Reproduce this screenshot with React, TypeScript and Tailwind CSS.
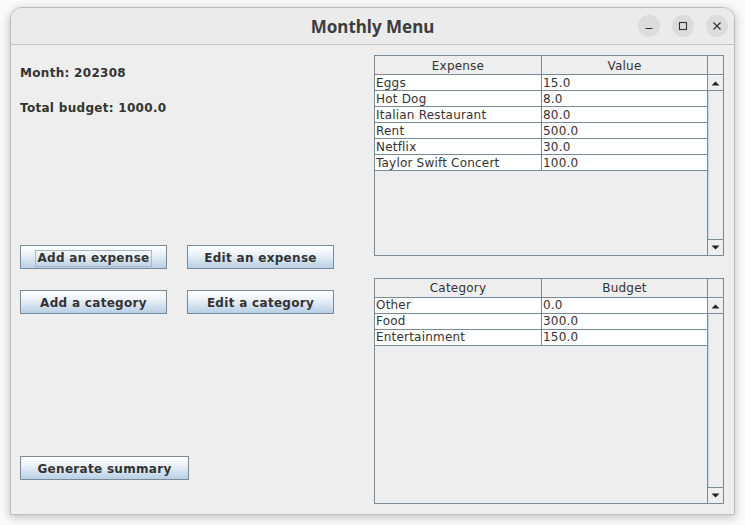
import React from "react";

const expenses: [string, string][] = [
  ["Eggs", "15.0"],
  ["Hot Dog", "8.0"],
  ["Italian Restaurant", "80.0"],
  ["Rent", "500.0"],
  ["Netflix", "30.0"],
  ["Taylor Swift Concert", "100.0"],
];

const categories: [string, string][] = [
  ["Other", "0.0"],
  ["Food", "300.0"],
  ["Entertainment", "150.0"],
];

function Arrow({ up }: { up: boolean }) {
  return (
    <svg width="9" height="5" viewBox="0 0 9 5">
      {up ? <path d="M0.5 4.5 L4.5 0.5 L8.5 4.5 Z" fill="#222" /> : <path d="M0.5 0.5 L4.5 4.5 L8.5 0.5 Z" fill="#222" />}
    </svg>
  );
}

function ScrollButton({ up }: { up: boolean }) {
  return (
    <div
      className={`h-[16px] flex items-center justify-center bg-[#eeeeee] border-[#7a8a99] ${
        up ? "border-b border-t border-t-white" : "border-t"
      }`}
    >
      <Arrow up={up} />
    </div>
  );
}

function Table({
  h1,
  h2,
  rows,
  height,
  shift,
}: {
  h1: string;
  h2: string;
  rows: [string, string][];
  height: string;
  shift: boolean;
}) {
  const pad = shift ? "pt-[1px]" : "";
  return (
    <div className={`w-[350px] ${height} border border-[#7a8a99] bg-[#eeeeee] flex flex-col text-[12px] tracking-[0.2px] text-[#333333]`}>
      <div className="h-[19px] flex border-b border-[#7a8a99] leading-[18px]">
        <div className={`w-[167px] border-r border-[#7a8a99] text-center ${pad}`}>{h1}</div>
        <div className={`w-[166px] border-r border-[#7a8a99] text-center ${pad}`}>{h2}</div>
        <div className="w-[15px]"></div>
      </div>
      <div className="flex-1 flex">
        <div className="w-[333px] border-r border-[#7a8a99] flex flex-col">
          {rows.map(([a, b]) => (
            <div key={a} className="h-[16px] flex bg-white border-b border-[#7a8a99] leading-[15px]">
              <div className={`w-[167px] border-r border-[#7a8a99] pl-[1px] whitespace-nowrap ${pad}`}>{a}</div>
              <div className={`w-[165px] pl-[1px] ${pad}`}>{b}</div>
            </div>
          ))}
        </div>
        <div className="w-[15px] flex flex-col bg-[#eeeeee]">
          <ScrollButton up={true} />
          <div className="flex-1 border-l border-[#c9d8e8]"></div>
          <ScrollButton up={false} />
        </div>
      </div>
    </div>
  );
}

function JButton({ label, width, focused }: { label: string; width: string; focused?: boolean }) {
  return (
    <div
      className={`${width} h-[24px] border border-[#7a8a99] bg-[linear-gradient(to_bottom,#ffffff_0%,#eef3f9_35%,#b8cfe5_100%)] flex items-center justify-center pt-[2px] text-[12px] font-bold tracking-[0.3px] text-[#333333]`}
    >
      {focused ? (
        <span className="border border-[#a3b8cc] px-[1px] leading-[15px]">{label}</span>
      ) : (
        <span className="leading-[15px]">{label}</span>
      )}
    </div>
  );
}

export default function App() {
  return (
    <div className="w-[745px] h-[525px] bg-[#fafafa] overflow-hidden font-['DejaVu_Sans',sans-serif]">
      <div className="ml-[10px] mt-[7px] w-[725px] h-[508px] rounded-t-[12px] border border-[#bdbdbd] bg-[#eeeeee] shadow-[0_2px_10px_rgba(0,0,0,0.25)] flex flex-col overflow-hidden">
        <div className="relative h-[37px] shrink-0 bg-[#ebebeb] border-b border-[#c4c4c4] flex items-center justify-center">
          <span className="font-['Noto_Sans',sans-serif] font-bold text-[17px] text-[#3d3d3d] leading-none">Monthly Menu</span>
          <div className="absolute right-[6px] top-[7px] flex gap-[12px]">
            <div className="w-[22px] h-[22px] rounded-full bg-[#dcdcdc] flex items-center justify-center">
              <svg width="10" height="10" viewBox="0 0 10 10"><path d="M1.5 7.5 H8.5" stroke="#333" strokeWidth="1.2" /></svg>
            </div>
            <div className="w-[22px] h-[22px] rounded-full bg-[#dcdcdc] flex items-center justify-center">
              <svg width="10" height="10" viewBox="0 0 10 10"><rect x="1.5" y="1.5" width="7" height="7" fill="none" stroke="#333" strokeWidth="1.1" /></svg>
            </div>
            <div className="w-[22px] h-[22px] rounded-full bg-[#dcdcdc] flex items-center justify-center">
              <svg width="10" height="10" viewBox="0 0 10 10"><path d="M1.5 1.5 L8.5 8.5 M8.5 1.5 L1.5 8.5" stroke="#333" strokeWidth="1.2" /></svg>
            </div>
          </div>
        </div>
        <div className="flex-1 flex">
          <div className="w-[363px] pl-[9px] pt-[20px] flex flex-col text-[#333333] tracking-[0.3px]">
            <div className="h-[16px] leading-[16px] text-[12px] font-bold">Month: 202308</div>
            <div className="mt-[19px] h-[16px] leading-[16px] text-[12px] font-bold">Total budget: 1000.0</div>
            <div className="mt-[129px] flex gap-[20px]">
              <JButton label="Add an expense" width="w-[147px]" focused />
              <JButton label="Edit an expense" width="w-[147px]" />
            </div>
            <div className="mt-[21px] flex gap-[20px]">
              <JButton label="Add a category" width="w-[147px]" />
              <JButton label="Edit a category" width="w-[147px]" />
            </div>
            <div className="mt-[142px]">
              <JButton label="Generate summary" width="w-[169px]" />
            </div>
          </div>
          <div className="pt-[10px] flex flex-col gap-[22px]">
            <Table h1="Expense" h2="Value" rows={expenses} height="h-[201px]" shift={true} />
            <Table h1="Category" h2="Budget" rows={categories} height="h-[226px]" shift={false} />
          </div>
        </div>
      </div>
    </div>
  );
}
